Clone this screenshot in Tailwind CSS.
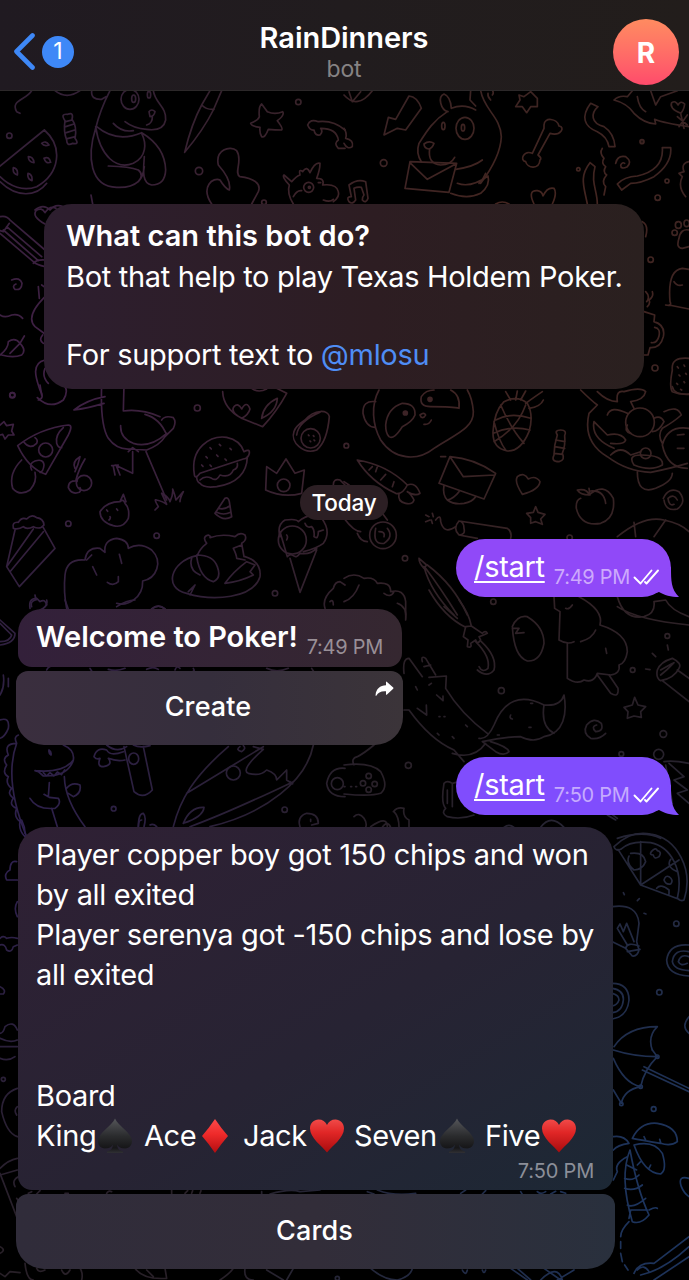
<!DOCTYPE html>
<html lang="en">
<head>
<meta charset="utf-8">
<title>RainDinners</title>
<script src="https://cdn.jsdelivr.net/npm/@tailwindcss/browser@4"></script>
</head>
<body class="bg-black">
<div class="relative isolate flex h-[1280px] w-[689px] flex-col overflow-hidden bg-black font-['Inter','Liberation_Sans',sans-serif] text-[29px] text-white">

  <!-- Doodle wallpaper: white strokes mask a soft colour wash -->
  <svg class="absolute inset-0 -z-10" width="689" height="1280" viewBox="0 0 689 1280">
    <defs>
      <radialGradient id="wp" gradientUnits="userSpaceOnUse" cx="60" cy="350" r="460"><stop offset="0" stop-color="#402046"/><stop offset="1" stop-color="#402046" stop-opacity="0"/></radialGradient>
      <radialGradient id="wr" gradientUnits="userSpaceOnUse" cx="540" cy="260" r="460"><stop offset="0" stop-color="#48261f"/><stop offset="1" stop-color="#48261f" stop-opacity="0"/></radialGradient>
      <radialGradient id="wb" gradientUnits="userSpaceOnUse" cx="689" cy="1200" r="480"><stop offset="0" stop-color="#1b3663"/><stop offset="1" stop-color="#1b3663" stop-opacity="0"/></radialGradient>
      <radialGradient id="wv" gradientUnits="userSpaceOnUse" cx="0" cy="850" r="380"><stop offset="0" stop-color="#2e2050"/><stop offset="1" stop-color="#2e2050" stop-opacity="0"/></radialGradient>
      <mask id="doodles" maskUnits="userSpaceOnUse" x="0" y="0" width="689" height="1280">
        <g fill="none" stroke="#fff" stroke-width="5" stroke-linecap="round" stroke-linejoin="round">
          <!-- top left -->
          <g transform="scale(.33333)">
            <path d="M95 272C80 300 30 300 50 335L60 340M165 272Q200 300 240 272"/>
            <circle cx="28" cy="407" r="8"/>
            <path d="M133 390L0 498M133 390C190 440 180 520 110 560C70 575 30 560 0 530M0 545C50 595 110 590 140 550M125 430q12-10 22 5q-15 5-22-5M85 470q15 0 17 18q-17-2-17-18M132 475q15-8 20 12q-15 5-20-12M40 503q15 3 12 22q-15-5-12-22M84 520q14 3 12 22q-15-5-12-22"/>
            <path d="M195 362Q180 340 203 343Q222 335 216 358Q232 380 225 415Q240 435 218 430Q200 440 200 420Q190 395 195 362M197 365L216 360M197 380L222 372M199 398L224 390M202 416L226 410"/>
            <path d="M330 272Q300 330 287 385C260 470 270 560 350 562C410 565 440 530 415 510Q390 500 325 498M275 272Q272 300 305 298L318 290M287 380C300 470 350 510 400 490C440 470 440 430 425 400M290 380Q350 430 425 398Q495 440 497 510Q495 555 455 555C425 550 430 510 433 470M433 500Q430 530 415 545M460 272C465 310 500 320 497 360Q490 395 440 388Q400 385 375 365M340 370Q365 398 400 392M447 335Q455 325 465 335Q462 350 450 350ZM457 350Q458 370 440 375"/>
            <ellipse cx="390" cy="298" rx="27" ry="30"/><ellipse cx="401" cy="296" rx="6" ry="11"/><ellipse cx="447" cy="284" rx="5" ry="10"/>
            <path d="M630 272L605 315Q575 370 554 457Q610 390 640 330L665 272M605 315Q620 330 642 328"/>
            <path d="M785 312L802 335Q825 345 848 335Q855 345 832 362Q850 385 845 390Q825 390 805 388Q795 415 785 410Q778 400 780 382Q755 380 752 370Q775 360 778 350Q775 320 785 312Z"/>
            <circle cx="895" cy="306" r="8"/><circle cx="597" cy="513" r="11"/><circle cx="792" cy="607" r="7"/>
            <path d="M1035 390Q1000 360 955 365Q930 355 923 375Q930 392 942 390Q945 408 960 405Q970 395 962 385Q1010 385 1015 420Q1000 430 1015 445L1035 445"/>
            <path d="M635 612C600 560 640 530 660 540Q675 565 688 570Q695 540 655 495C645 450 690 435 710 452C730 480 700 520 720 530C760 535 785 550 775 575L755 612M273 585L278 612M105 630Q130 610 150 630Q165 610 190 620"/>
            <path d="M880 612Q860 580 868 555Q845 530 852 525L875 545Q890 528 900 525Q895 505 908 515Q920 495 930 518Q945 485 960 490Q960 510 950 535Q975 535 968 555Q1010 550 1015 575Q1020 590 1000 605M880 590Q890 570 905 572M955 548L962 548M970 600Q990 608 1000 598"/><circle cx="926" cy="562" r="15"/><circle cx="928" cy="562" r="3"/>
          </g>
          <!-- top right -->
          <g transform="translate(344 0) scale(.33333)">
            <path d="M0 285Q40 330 85 272M15 275L25 305L50 275M0 385Q10 400 5 415Q30 420 25 440Q10 450 0 430"/>
            <path d="M195 288Q220 290 232 325L185 390L160 385L120 405L133 352L155 358Z"/>
            <path d="M312 335C290 330 280 290 300 282Q320 290 322 325Q360 310 395 330M380 272L378 300L395 318M410 272C420 330 470 350 472 410C470 460 440 510 410 550M310 335C270 360 250 390 225 430Q215 460 232 485M240 432Q255 420 270 430Q265 445 255 447Q240 445 240 432M257 447Q250 490 290 495Q320 495 332 472M335 508Q390 500 415 480M440 300Q430 290 432 280M445 285Q450 280 446 272"/>
            <ellipse cx="363" cy="385" rx="27" ry="33"/><ellipse cx="357" cy="383" rx="5" ry="10"/><ellipse cx="298" cy="378" rx="5" ry="11"/>
            <path d="M198 485L338 490L315 577L183 565ZM200 490L250 538L335 492M340 550Q380 565 432 528Q440 555 410 580Q370 600 320 580M405 550Q420 535 425 520"/>
            <circle cx="119" cy="489" r="10"/>
            <path d="M15 605Q5 590 22 590L15 555Q40 535 65 545L72 595Q65 612 55 600Q55 590 60 585L52 562Q40 560 30 565L35 600Q25 615 15 605"/>
            <path d="M525 285L540 290L560 275L580 295L580 320L560 320L548 338L535 320L515 320L528 300Z"/>
            <path d="M600 385L565 460C540 450 525 480 545 485C550 505 585 510 588 480Q595 475 582 465L618 400C650 410 665 380 645 378C640 355 600 350 600 375Z"/>
            <path d="M570 612Q550 570 580 572Q595 575 597 588Q610 560 630 565Q640 580 625 612M455 612Q475 600 495 612"/>
            <path d="M740 310C710 350 720 380 760 395Q790 410 795 440L813 440Q810 400 780 380C740 370 740 340 762 320ZM775 445Q765 460 780 475Q770 490 785 500Q775 515 788 525Q770 545 785 560L780 585M738 488C705 530 720 560 730 612M760 612C760 570 740 550 753 500L738 488"/>
            <path d="M810 300Q825 285 850 290L865 272M810 300Q850 310 870 340Q900 370 935 372L932 358Q960 370 1035 380M880 290Q885 325 905 335M920 272L935 315L950 290L1000 272"/>
            <path d="M1010 340Q975 325 983 308Q995 300 1002 315Q1010 300 1022 312Q1020 330 1010 340L1020 385M1000 350L1030 375M1030 345L1005 380"/>
            <circle cx="894" cy="425" r="6" fill="#fff" fill-opacity=".5"/><circle cx="703" cy="508" r="5"/><circle cx="969" cy="543" r="6"/><circle cx="941" cy="593" r="8"/>
            <path d="M815 490Q820 465 845 470Q865 485 850 500Q830 510 830 495Q835 485 842 490M955 443L980 443Q985 490 930 530Q890 550 860 550L833 570L820 552Q840 530 880 528Q960 510 955 443M1035 485Q1010 490 1020 515L1005 520L1015 530Q1000 560 1025 590"/>
          </g>
          <!-- beside the description card -->
          <g transform="translate(0 200) scale(.33333)">
            <path d="M135 72Q95 50 108 32Q125 20 135 38Q150 15 168 25M0 50Q20 45 32 62L135 150M0 100L100 185Q110 195 135 200M28 70L10 95L0 92M10 90L115 182M20 80L125 170M100 190Q110 178 135 180"/>
            <path d="M35 240Q60 230 66 250Q65 272 45 268Q35 258 48 252M0 345Q15 355 35 345Q55 340 68 355M0 465Q25 445 25 425Q45 410 60 430L73 408M60 430Q80 450 65 465Q40 475 5 465M30 460L60 430M135 290Q75 350 105 380L135 402M115 260L118 295M125 255L135 262M128 405Q115 420 130 430M135 480C90 490 110 540 120 570Q135 595 115 600M135 505Q125 530 145 550"/>
            <circle cx="37" cy="585" r="7"/>
          </g>
          <g transform="translate(344 200) scale(.33333)">
            <circle cx="920" cy="179" r="8"/><circle cx="933" cy="504" r="9"/>
            <ellipse cx="992" cy="98" rx="8" ry="8"/><ellipse cx="1003" cy="75" rx="9" ry="10"/><ellipse cx="1028" cy="70" rx="8" ry="10"/>
            <path d="M1035 90Q1010 85 1005 115Q995 145 1015 145L1035 140M895 65Q915 75 905 110M905 275Q920 290 908 305M925 275Q930 290 915 300Q920 310 910 320M900 335L932 345L930 365Q965 375 958 410Q950 445 918 443L912 465L900 465M932 382Q950 385 945 408Q940 430 922 428M965 315Q985 320 978 305Q970 210 1015 205L1035 208M975 315L1035 327M990 245Q1000 260 1015 255M1035 475Q980 470 985 510Q975 560 985 575Q1010 585 1035 582M1000 500l3 4M1020 495l2 4M1005 525l3 3M1025 520l2 3M998 550l3 3M1020 545l2 3M1010 568l3 2"/>
          </g>
          <!-- middle left -->
          <g transform="translate(0 385) scale(.33333)">
            <circle cx="37" cy="31" r="8"/><circle cx="592" cy="69" r="9"/><circle cx="205" cy="416" r="8"/><circle cx="470" cy="452" r="8"/><circle cx="825" cy="625" r="8"/>
            <path d="M120 0L125 30M112 38Q150 75 190 45Q205 20 195 5M0 120L12 110L20 122L40 118L35 138L42 150L25 150L15 162L8 148L0 150"/>
            <path d="M53 182Q120 130 205 120Q220 120 205 150L137 268Q85 250 53 182ZM72 172Q90 195 110 175Q115 165 105 158M190 128Q165 150 170 175Q175 190 185 188M95 255Q85 235 105 228Q130 220 132 240Q130 260 120 262M65 225Q25 265 38 310Q60 335 90 315Q112 290 105 262"/><circle cx="137" cy="195" r="21"/>
            <circle cx="252" cy="294" r="23"/><path d="M232 288Q205 285 205 308Q215 330 238 322Q245 315 240 308M228 285Q235 255 255 222M225 250Q215 230 240 215Q235 240 225 260"/>
            <path d="M305 0Q300 120 325 160Q350 195 390 192L440 195Q480 180 495 155L520 130Q530 110 520 98Q495 90 485 105M315 35Q260 45 222 75Q260 70 312 55M372 0L370 78Q420 70 480 95M362 122Q360 160 400 175Q450 190 500 145M435 88Q480 100 500 150M385 200L398 188L415 200M398 200V265L345 240M360 270L350 245M340 245L345 270M355 240L335 242M438 200L500 345M465 375L475 365Q460 340 470 345Q490 350 500 358L485 325Q505 335 510 350Q520 330 518 312Q525 330 528 345L550 320Q540 340 540 350"/>
            <path d="M583 268C570 190 630 150 680 157Q720 165 732 200Q750 190 748 205Q745 220 730 222L600 265Q585 285 583 268M590 275Q590 290 600 295Q610 310 650 305Q740 290 742 215M600 285Q615 270 635 280Q650 290 660 270Q690 280 700 255Q715 250 712 235"/>
            <path d="M630 188l4 4M658 178l4 4M690 190l4 4M618 215l4 4M650 210l4 4M675 222l4 4M605 240l4 4M630 240l4 4"/>
            <path d="M668 20Q670 70 725 100L788 125Q830 80 860 25Q840 15 830 10M725 100Q690 80 702 65Q715 52 725 72Q740 45 750 72Q745 90 725 100M785 100Q790 60 832 40Q830 80 785 100M755 10Q775 25 800 12"/>
            <path d="M915 105C945 70 985 75 988 95C985 130 975 175 950 195C910 210 870 170 882 140Q885 125 915 105M960 82Q895 110 890 150"/><circle cx="932" cy="160" r="29"/><path d="M925 150l2 2M940 152l2 2M930 168l2 2M942 165l2 2"/>
            <path d="M797 315L800 245L830 265L858 222L885 265L913 255L905 325Q850 340 797 315Z"/><circle cx="851" cy="301" r="19"/>
            <path d="M1000 300Q1000 280 1020 285L1035 300M840 455Q830 420 855 405Q890 400 895 410Q930 380 965 400Q995 440 970 475Q950 490 910 500M840 440L862 515Q870 505 880 512Q890 520 900 505Q930 510 950 490M870 520L900 622L950 495M915 415Q920 430 935 425Q945 435 942 455Q955 465 955 440L970 435M860 465Q865 455 860 450"/><circle cx="877" cy="465" r="42"/>
            <path d="M645 385L675 340Q685 335 688 350L695 395Q670 410 645 385M655 370Q675 375 690 362M650 382Q670 392 692 382"/>
            <path d="M300 380Q320 350 360 350Q370 340 375 355Q390 370 385 400Q370 430 340 422Q300 410 300 380M360 350L370 328L378 350M320 375l3 4M350 372l3 4M330 395q3 5-3 10"/>
            <path d="M40 430Q35 410 55 412Q65 395 80 402Q95 385 110 398Q130 400 132 420Q120 435 100 425Q80 435 70 425Q55 435 40 430M45 435L20 545L58 605L165 490L130 428M100 432L20 545M30 560L130 440"/>
            <path d="M200 670Q190 620 195 570Q200 520 255 525Q260 485 300 490L315 502Q310 465 350 460Q385 465 385 490Q420 470 455 495C490 530 470 580 428 588C430 640 380 665 350 655M278 545L290 570M358 508L365 535M322 592Q340 605 355 590V575M260 525L275 510M90 670Q85 640 110 640L120 650Q135 640 140 660M105 630L108 645"/>
            <path d="M590 515Q600 490 620 475Q605 455 625 450Q635 455 630 458Q665 445 705 455Q720 440 735 450Q742 465 725 475L732 515M590 510Q640 510 652 545Q665 580 640 590Q600 580 590 515M590 512C510 530 490 610 560 625C640 650 760 640 780 575Q785 530 735 515M585 600L570 630M585 600L565 620M700 490Q710 510 710 520L735 525M675 595Q700 560 740 530L765 540L750 560L760 570Q720 590 675 595M700 490L725 480M575 520Q565 555 600 570"/>
            <path d="M975 670Q965 640 1000 610Q1005 590 1020 590L1035 600M990 650Q1000 640 1000 660M455 672Q475 655 495 672"/>
          </g>
          <!-- middle right -->
          <g transform="translate(344 385) scale(.33333)">
            <circle cx="7" cy="182" r="7"/><circle cx="183" cy="520" r="8"/><circle cx="448" cy="650" r="8"/><circle cx="677" cy="458" r="8"/>
            <path d="M105 15C80 60 85 120 110 165C150 225 220 230 270 190C330 150 390 130 388 80Q385 40 370 15M95 50Q55 45 57 85Q65 125 92 127M232 35Q245 15 270 15M232 35Q225 65 260 65Q330 65 345 70Q350 30 320 15M125 120Q130 70 175 55Q215 55 213 90Q205 110 175 125Q150 165 135 155Q125 145 125 120M240 118Q255 120 262 105M228 90Q240 80 245 90Q240 100 232 97Z"/><circle cx="258" cy="43" r="6" fill="#fff"/><circle cx="184" cy="84" r="6" fill="#fff"/>
            <path d="M480 50Q520 30 550 55Q570 90 555 140Q530 200 490 198Q445 190 447 140Q450 80 480 50ZM455 105Q500 80 560 100M448 145Q500 120 558 135M470 60Q500 130 540 175M450 110Q465 170 485 195M545 60Q520 130 450 170M500 45L485 20M515 45L520 18M530 45L545 18M545 55Q580 30 595 20M555 70Q590 65 598 45"/>
            <path d="M640 150Q630 135 650 135Q670 135 662 152Q665 180 655 205Q665 225 645 230Q620 230 630 210Q630 180 640 150M635 165L663 170M632 185L662 190M630 205L656 208"/>
            <path d="M710 15Q740 45 760 60L735 85Q715 170 790 215Q850 260 920 262Q980 250 1030 235M760 20Q790 50 820 50Q815 15 840 20Q890 5 905 20Q900 45 860 50L870 70M850 85Q800 60 790 90M750 110Q740 160 810 190M750 110Q770 130 790 150Q830 140 845 165Q840 180 800 175M800 210Q830 180 860 210L890 200M870 240Q850 210 890 210Q960 210 955 240Q920 260 870 240M880 260Q880 330 935 310Q985 290 985 265M1035 130Q970 120 955 180Q970 250 1030 250M960 80Q1000 60 1012 90Q990 110 955 130Q940 150 955 175M1000 150L1020 148M1000 190L1020 190"/><circle cx="888" cy="112" r="43"/><circle cx="905" cy="205" r="16"/>
            <path d="M850 120Q840 140 860 145M930 100Q950 90 960 110Q945 140 925 140M985 5Q990 30 1035 28"/>
            <path d="M40 225Q130 240 190 300Q175 330 155 325Q80 290 40 225ZM75 255L85 245M100 245L95 260M110 285L125 268M145 305L150 290M165 325Q160 350 185 355Q205 360 210 345Q200 325 190 320M190 300Q215 290 228 325Q215 335 190 320"/>
            <path d="M318 215Q390 220 455 265L420 342L285 295ZM318 215L358 275L452 270M300 300Q295 330 310 345Q330 340 345 320M310 345Q330 360 360 355Q385 350 395 335M290 215L305 215"/>
            <path d="M535 328Q510 290 520 275Q540 260 553 282Q575 270 588 290Q585 315 535 328M575 365L582 382L603 388L590 402L595 418L575 410L560 415L560 398L548 385L568 382Z"/>
            <path d="M735 330Q780 290 808 340Q815 400 770 415Q710 425 697 370Q695 345 710 340M735 330Q730 310 700 315Q710 330 735 330M735 310L738 330M740 318Q780 315 785 355"/>
            <path d="M958 340Q975 305 1005 320Q1030 350 1000 372Q965 380 960 345M1000 345Q990 325 972 340Q975 365 990 358"/>
            <path d="M245 390L255 395M245 410L258 405M265 415L262 405M265 385L268 395M275 405Q290 385 290 410Q300 450 335 425M345 408Q325 430 345 450Q365 450 360 430Q360 410 345 408L490 430Q505 440 500 460M345 450L400 460"/>
            <path d="M820 455Q900 390 960 405Q1010 415 1035 440M870 412L875 455M965 405L930 455M0 400Q30 440 50 440M40 445Q50 470 70 470M0 290L15 300M115 385L130 405"/><circle cx="117" cy="451" r="40"/><path d="M95 430Q85 480 120 475Q150 455 130 430M105 440Q125 440 120 455"/>
            <path d="M225 520L248 540L240 550Q225 535 225 520M240 545Q260 620 330 690M250 540Q330 600 370 690M245 550Q290 610 340 690M0 580Q30 560 60 580Q90 575 100 595Q140 590 140 620Q180 610 185 650L185 690M45 600Q30 640 0 650M120 625Q140 640 150 620"/>
          </g>
          <g transform="translate(344 590) scale(.33333)">
            <circle cx="472" cy="302" r="9"/><circle cx="193" cy="526" r="9"/><circle cx="970" cy="138" r="7"/><circle cx="866" cy="240" r="7"/><circle cx="958" cy="432" r="10"/><circle cx="832" cy="492" r="7"/><circle cx="944" cy="493" r="15"/>
            <path d="M160 40Q190 50 185 90M255 0Q300 80 365 112M345 30Q375 70 382 108M300 50L340 85M365 110L358 140L372 150L370 170Q385 175 380 160L395 150Q400 165 410 150L405 140Q420 135 430 130Q425 120 415 130L382 108ZM395 155Q440 200 432 235Q415 250 405 230M412 155Q460 200 450 240Q430 265 400 240"/>
            <path d="M505 110Q520 75 550 80Q600 110 600 160Q590 215 550 213Q510 200 505 110M505 115L525 115L515 130L540 128"/>
            <path d="M630 20L632 55L648 65L645 150Q670 165 690 155M710 155Q745 145 755 120M705 20Q780 60 768 105Q850 130 850 185Q845 220 825 225Q830 250 800 255L760 250Q750 280 720 270Q700 285 670 265L670 160M760 255L800 310Q825 325 822 295L795 255M665 55Q675 60 685 45M785 175L788 190"/>
            <path d="M180 250Q175 205 195 205L235 260M235 215Q230 195 245 205L275 255M240 230L260 225M255 262L307 258L305 295Q350 370 430 430M180 360H195Q260 450 330 480L360 515M278 315L297 332V318M220 355L248 375L247 345M215 290L220 300M255 285L262 280M285 380h3M300 380h3M280 430l5 5M365 405l5 5M325 440l5 5M325 490Q390 510 425 460M405 445Q430 450 450 405C480 330 530 310 600 345Q650 350 660 315C670 370 660 430 600 440Q570 460 530 440Q480 440 415 455L455 485Q480 500 495 485Q490 470 440 455M600 345Q590 410 630 430M500 375q-5 10 5 12M560 340h6M555 412h6M460 435h6"/>
            <path d="M820 20Q840 90 900 80Q935 70 930 35L965 30Q980 60 1035 80M820 50Q880 90 1035 105M940 240Q950 215 985 205Q1015 220 1005 235Q990 265 950 272Q935 265 940 240M950 240Q975 225 990 218Q970 240 950 255M955 272L1035 335M1000 240L1035 265M970 165L973 180M925 190L935 200M905 237L918 239"/>
            <path d="M872 322L882 345L905 350L890 365L892 382L870 378L850 385L852 365L840 352L865 345ZM785 430Q765 450 740 445Q715 430 728 405Q750 380 772 400Q780 425 755 425Q740 410 758 405"/>
            <path d="M90 465Q60 490 40 500Q20 505 30 525M0 525Q80 515 110 545Q135 590 110 610Q80 620 0 612M0 590h3M20 590h3M35 590h3"/><circle cx="74" cy="558" r="8"/><circle cx="57" cy="580" r="8"/><circle cx="92" cy="582" r="8"/><circle cx="74" cy="599" r="8"/>
            <path d="M300 580Q310 570 325 580L345 575M300 580Q290 640 305 655Q290 670 310 680Q350 690 390 675M325 580V650M310 600v40M30 680Q45 665 60 685Q70 700 65 712M148 665Q160 650 180 655Q175 680 195 690L195 712M150 665Q165 680 165 712M115 712Q130 690 140 712M590 712Q620 670 660 712M480 712Q495 700 510 712M790 675L815 690M800 670L820 685M960 515Q985 510 1035 520M965 525Q975 580 985 640M975 520L1020 560L990 570L1030 600L1000 610L1035 640M820 745Q900 720 950 745"/>
          </g>
          <g transform="translate(0 600) scale(.33333)">
            <path d="M0 60L45 100Q45 130 0 135M0 70L35 105Q30 125 0 125M10 225Q15 260 0 285M25 235v25M0 360Q30 350 25 385Q15 410 0 415M95 20Q90 5 105 0M140 0Q145 20 120 30M195 0L205 28M350 20Q380 0 405 0M455 27Q475 10 495 27"/>
            <path d="M140 210q5-10 10-10M270 205l5 8M325 208Q350 215 375 205M440 208Q460 198 475 208M525 210q5-15 15-5M580 205q5 8 0 8M800 205Q830 220 865 205M935 205l5 8"/>
            <path d="M55 405Q40 410 50 430Q10 430 25 465Q5 475 20 495Q5 520 25 530Q15 550 35 565Q20 580 40 595Q25 615 50 625Q40 650 60 665Q55 690 75 710M50 430Q10 540 80 710M190 435Q225 450 220 480Q205 530 130 528L115 515L105 512M105 512Q190 520 220 480M130 518l10 10 10-10 12 10 10-12 12 8 10-14M147 450Q155 455 153 465Q145 460 147 450M148 548L145 590L132 583M90 595Q110 630 165 625Q185 610 175 595L148 592M155 625L172 680M193 530Q195 600 255 680M200 565Q215 545 240 555Q245 580 220 590L205 580"/>
            <path d="M372 440L402 575Q430 600 457 570L430 440M370 455Q330 470 320 450Q290 440 282 470Q290 480 300 475Q290 500 310 500Q340 495 325 475Q350 485 375 480M320 435Q350 460 380 440M400 435Q420 445 450 437"/><ellipse cx="401" cy="476" rx="15" ry="17"/>
            <circle cx="341" cy="626" r="7"/><circle cx="854" cy="629" r="8"/><circle cx="700" cy="519" r="21"/>
            <path d="M520 680C540 600 580 530 685 440M560 580L790 440M940 435C920 540 800 640 630 680M570 680Q680 640 880 545M720 440Q705 450 725 455Q740 445 730 437M760 440L790 448Q720 510 745 520Q780 530 800 510Q830 520 830 540L860 510V540Q890 560 870 545M550 670Q570 620 612 622Q610 650 550 670M415 680Q415 640 430 640Q440 650 432 680M900 680Q890 650 920 640Q955 640 955 670L935 675M932 658v6"/>
            <path d="M1035 505Q990 500 980 550Q985 590 1035 590"/><circle cx="1012" cy="551" r="18"/>
          </g>
          <!-- lower edges -->
          <g transform="translate(0 820) scale(.33333)">
            <path d="M65 0Q75 20 75 40M50 125Q30 120 30 150Q10 160 20 180L52 180M52 245Q40 265 52 290M0 355Q10 345 20 355Q35 350 52 355M0 375Q15 370 20 390Q35 400 40 380L52 375M0 500Q20 510 10 522L0 522M0 640Q10 640 15 620Q40 600 52 630M0 655Q30 670 52 660M0 680H52M415 20Q415 0 425 0M450 15Q460 10 470 20"/>
          </g>
          <g transform="translate(344 820) scale(.33333)">
            <path d="M810 80Q860 30 920 42C1000 55 1050 150 1020 240Q1010 245 1000 235C1020 150 980 80 920 68Q860 60 830 88Q815 95 810 80M822 88L890 195L1005 238M890 65V195L1005 120M860 100Q900 95 905 125Q895 150 870 150Q845 130 855 108M980 118Q965 140 1000 155M938 205Q950 190 975 210V222M922 95Q935 80 940 92Q955 95 945 110Q930 120 928 105Q915 105 922 95M960 180Q965 165 975 170Q990 180 980 192Q965 195 960 180"/>
            <path d="M805 260Q880 250 885 310Q880 350 878 365L885 390Q880 410 865 408L845 385L805 365M845 385Q850 365 885 378M850 395L888 388M820 325L850 375M820 325L828 312L838 335L848 310L870 365M838 218l3 6M880 242l6-6M900 280l6 2"/>
            <circle cx="997" cy="311" r="8"/><circle cx="946" cy="517" r="8"/>
            <path d="M1035 375Q975 370 968 420Q970 465 1035 468M1035 395Q990 385 985 425Q990 450 1035 452M1035 410Q1010 400 1003 425Q1010 440 1030 430M805 490Q855 490 855 540Q850 590 805 597M805 505Q840 510 838 540Q835 575 805 578M805 520Q825 525 825 540Q820 555 805 558M1035 590Q1010 620 1035 640M810 680Q850 620 940 620Q910 650 925 690M80 20Q130 -15 130 20"/>
          </g>
          <g transform="translate(344 1050) scale(.33333)">
            <path d="M808 0Q870 20 940 20M925 0L940 20M808 25Q840 100 890 110M940 20Q900 60 890 110Q840 120 832 160L808 120M900 50L1035 115M895 60L1035 125M1035 385Q1000 375 1012 410Q1020 430 1035 440"/>
            <circle cx="940" cy="20" r="5"/><circle cx="890" cy="110" r="5"/><circle cx="832" cy="162" r="5"/><circle cx="929" cy="177" r="7"/>
            <path d="M865 265Q890 215 940 220Q1000 230 1000 275Q980 290 950 280Q890 270 865 265M870 285Q930 270 955 310Q970 360 950 372Q900 370 870 285M808 260Q840 255 855 280Q820 285 808 300M850 320Q810 340 820 365L808 390M880 345l10-10M915 355l5-10M905 270l-5-10M950 278l-3-10"/>
            <path d="M858 300Q825 380 865 515Q890 525 915 495Q880 420 858 300M848 345l30 15M842 385Q865 395 885 375M842 415Q870 425 895 405M850 465Q870 475 905 445M855 505L860 480L910 480M915 480Q935 470 940 475M855 515Q830 540 830 560M830 575V595M830 610L835 635M842 645L852 660"/>
            <path d="M870 670Q885 635 930 640L1035 560M890 675Q960 660 1035 590M880 660Q900 640 915 665M930 690L1035 620M80 655Q120 690 160 690Q200 680 205 655M355 660q10 20 15 0M415 660q5 15 10 0M500 655L550 690M520 655L560 690M590 690Q640 640 655 690M600 655L650 690M690 660L640 690"/>
            <path d="M70 425L90 432M100 420Q150 440 215 430M350 430l15-10M415 432l10-10M530 425l5 8M580 425Q590 435 605 425M620 432l15-8M650 425l15 5"/>
          </g>
          <g transform="translate(0 1050) scale(.33333)">
            <path d="M0 25Q25 35 45 20M52 115Q5 130 5 185Q20 250 52 260M52 170Q40 180 50 195M0 355Q25 330 52 325M0 375L52 360M0 370L50 500M55 380Q35 390 45 410M50 445Q60 455 52 465M0 590Q20 600 0 610M0 670L15 680L30 665L60 668M75 640Q80 690 100 690M110 655Q115 670 135 660M185 660q10 25 25 0M240 655Q250 670 245 690M405 655Q430 690 500 685L495 655M440 660l20 20M660 690Q690 670 700 655M735 655Q730 690 760 690M800 660L850 690M880 655L860 690M85 430l10-5M110 432l10-10M195 430l10 0M320 430q5-10 15-5M515 420v12M555 430l8-8M575 430l3-8M600 430l3-8M785 425v10M810 432Q870 415 900 425L960 420"/>
            <circle cx="10" cy="88" r="6"/><circle cx="1012" cy="685" r="6"/>
          </g>
        </g>
      </mask>
    </defs>
    <g mask="url(#doodles)">
      <rect width="689" height="1280" fill="#282028"/>
      <rect width="689" height="1280" fill="url(#wp)"/>
      <rect width="689" height="1280" fill="url(#wr)"/>
      <rect width="689" height="1280" fill="url(#wb)"/>
      <rect width="689" height="1280" fill="url(#wv)"/>
    </g>
  </svg>

  <header class="flex h-[91px] shrink-0 items-start justify-between border-b border-[#2c2829] bg-linear-to-r from-[#201a21] via-[#211c1e] to-[#221d1b] pr-[10px] pl-[12px]">
    <div class="mt-[32px] flex w-[120px] items-center gap-[7px]">
      <svg width="23" height="39" viewBox="0 0 23 39" fill="none" stroke="#3e88f7" stroke-width="4.6" stroke-linecap="round" stroke-linejoin="round"><path d="M20.500 3.500L4.500 19.500L20.500 35.500"/></svg>
      <span class="flex size-[32px] items-center justify-center rounded-full bg-[#3e88f7] text-[23px] leading-none">1</span>
    </div>
    <div class="mt-[19px] -ml-[3px] text-center">
      <h1 class="text-[29px] leading-[38px] font-semibold tracking-[-0.05px]">RainDinners</h1>
      <p class="text-[23px] leading-[24px] tracking-[-0.2px] text-[#868384]">bot</p>
    </div>
    <div class="mt-[19px] flex w-[120px] justify-end">
      <span class="flex size-[66px] items-center justify-center rounded-full bg-linear-to-b from-[#ff8b60] to-[#ff4a6b] pt-[1px] text-[28px] font-bold">R</span>
    </div>
  </header>

  <main class="flex flex-1 flex-col pt-[113px]">
    <section class="ml-[44px] h-[185px] w-[600px] rounded-[28px] bg-linear-to-r from-[#2d1e2f] via-[#2d1d22] via-55% to-[#2a201f] px-[22px] pt-[12px]">
      <h2 class="leading-[40px] font-semibold whitespace-nowrap">What can this bot do?</h2>
      <p class="mt-px leading-[39px] whitespace-nowrap tracking-[-0.31px]">Bot that help to play Texas Holdem Poker.<br><br>For support text to <a class="text-[#4f8df5]">@mlosu</a></p>
    </section>

    <div class="mt-[96px] ml-[300px] flex h-[35px] w-[88px] items-center justify-center rounded-full bg-[#2c1f24] text-[22.500px] font-medium tracking-[-0.2px]">Today</div>

    <section class="relative mt-[19px] ml-[456px] flex h-[58px] w-[215px] items-start rounded-[29px] bg-[#9049f8] pl-[18px]">
      <svg class="absolute right-[-8px] bottom-0" width="34" height="30" viewBox="0 0 34 30" fill="#9049f8"><path d="M26 0C26 14 26 22 34 30C26 30 19 28 14 25L0 29L10 10Z"/></svg>
      <span class="relative mt-[8px] leading-[40px] tracking-[-0.3px] underline decoration-2 underline-offset-[4px]">/start</span>
      <span class="relative mt-[26px] ml-[9px] text-[20px] leading-[24px] tracking-[-0.25px] whitespace-nowrap text-[#cda9fc]">7:49 PM</span>
      <svg class="relative mt-[30px] ml-[3px] shrink-0" width="27" height="17" viewBox="0 0 27 17" fill="none" stroke="#fff" stroke-width="1.9" stroke-linecap="round" stroke-linejoin="round"><path d="M1.5 8.500L7.500 14.500L18.500 1.500M12 13L13.500 14.500L25 1.500"/></svg>
    </section>

    <section class="mt-[12px] ml-[18px] flex h-[58px] w-[384px] items-start rounded-t-[24px] rounded-b-[14px] bg-linear-to-r from-[#33203a] to-[#352730] pl-[18px]">
      <span class="mt-[8px] leading-[40px] font-semibold tracking-[-0.07px] whitespace-nowrap">Welcome to Poker!</span>
      <span class="mt-[26px] ml-[9px] text-[20px] leading-[24px] tracking-[-0.25px] whitespace-nowrap text-[#998f97]">7:49 PM</span>
    </section>
    <button class="relative mt-[4px] ml-[16px] h-[74px] w-[387px] rounded-t-[12px] rounded-b-[28px] bg-linear-to-r from-[#3a2e3e] via-[#352e3c] to-[#3b3439] pr-[3px] pb-[1px] text-[27px] font-medium tracking-[0.1px]">Create
      <svg class="absolute top-[10px] right-[9px]" width="19" height="16" viewBox="0 0 19 16" fill="#fff"><path d="M11 1.2Q11 .2 12 .9L18.2 6.6Q18.8 7.2 18.2 7.8L12 13.4Q11 14.2 11 13.2V10.2C6 9.8 3 11.5 1.5 14.5Q.6 15.6 .6 14C1 8 5 4.6 11 4.3Z"/></svg>
    </button>

    <section class="relative mt-[12px] ml-[456px] flex h-[58px] w-[215px] items-start rounded-[29px] bg-[#804dfd] pl-[18px]">
      <svg class="absolute right-[-8px] bottom-0" width="34" height="30" viewBox="0 0 34 30" fill="#804dfd"><path d="M26 0C26 14 26 22 34 30C26 30 19 28 14 25L0 29L10 10Z"/></svg>
      <span class="relative mt-[8px] leading-[40px] tracking-[-0.3px] underline decoration-2 underline-offset-[4px]">/start</span>
      <span class="relative mt-[26px] ml-[9px] text-[20px] leading-[24px] tracking-[-0.25px] whitespace-nowrap text-[#c6abfe]">7:50 PM</span>
      <svg class="relative mt-[30px] ml-[3px] shrink-0" width="27" height="17" viewBox="0 0 27 17" fill="none" stroke="#fff" stroke-width="1.9" stroke-linecap="round" stroke-linejoin="round"><path d="M1.5 8.500L7.500 14.500L18.500 1.500M12 13L13.500 14.500L25 1.500"/></svg>
    </section>

    <section class="mt-[12px] ml-[18px] h-[363px] w-[595px] rounded-t-[28px] rounded-b-[14px] bg-linear-to-br from-[#2f2034] via-[#272333] via-55% to-[#1c2835] pt-[8px] pr-[19px] pl-[18px]">
      <p class="leading-[40.150px] whitespace-nowrap tracking-[-0.33px]">Player copper boy got 150 chips and won<br>by all exited<br>Player serenya got -150 chips and lose by<br>all exited<br><br><br>Board</p>
      <div class="flex h-[40px] leading-[40px] tracking-[-0.4px]">
        <span class="flex w-[108px] shrink-0 items-center gap-[1px]">King<svg width="36" height="36" viewBox="0 0 36 36"><use href="#spade"/></svg></span>
        <span class="flex w-[99px] shrink-0 items-center gap-[5px]">Ace<svg width="28" height="36" viewBox="0 0 28 36"><path d="M14 1Q20 10 27 18Q20 26 14 35Q8 26 1 18Q8 10 14 1Z" fill="url(#red)"/></svg></span>
        <span class="flex w-[111px] shrink-0 items-center gap-[2px]">Jack<svg width="36" height="36" viewBox="0 0 36 36"><use href="#heart"/></svg></span>
        <span class="flex w-[131px] shrink-0 items-center gap-[2px]">Seven<svg width="36" height="36" viewBox="0 0 36 36"><use href="#spade"/></svg></span>
        <span class="flex shrink-0 items-center gap-[1px]">Five<svg width="36" height="36" viewBox="0 0 36 36"><use href="#heart"/></svg></span>
      </div>
      <p class="mt-[3px] text-right text-[20px] leading-[24px] tracking-[-0.2px] text-[#8c8f99]">7:50 PM</p>
    </section>
    <button class="mt-[4px] ml-[16px] h-[75px] w-[599px] rounded-t-[12px] rounded-b-[28px] bg-linear-to-r from-[#302c3a] via-[#322d39] to-[#29303d] pr-[2px] text-[27px] font-medium tracking-[0.1px]">Cards</button>
  </main>

  <svg class="absolute" width="0" height="0">
    <defs>
      <linearGradient id="red" x1="0" y1="0" x2="0" y2="1"><stop offset="0" stop-color="#fb4a4a"/><stop offset=".45" stop-color="#ee2a2a"/><stop offset="1" stop-color="#b30d10"/></linearGradient>
      <linearGradient id="redh" x1="0" y1="0" x2="0" y2="1"><stop offset="0" stop-color="#f04a48"/><stop offset=".4" stop-color="#e02626"/><stop offset="1" stop-color="#a80c0e"/></linearGradient>
      <linearGradient id="blk" x1="0" y1="0" x2="0" y2="1"><stop offset="0" stop-color="#55565a"/><stop offset=".5" stop-color="#2b2c2e"/><stop offset=".85" stop-color="#161618"/><stop offset="1" stop-color="#303034"/></linearGradient>
      <path id="heart" fill="url(#redh)" d="M18 34.500C13 28 1 20 1 10.500C1 5 5 1.500 9.500 1.500C13.500 1.500 16.500 3.500 18 7C19.500 3.500 22.500 1.500 26.500 1.500C31 1.500 35 5 35 10.500C35 20 23 28 18 34.500Z"/>
      <path id="spade" fill="url(#blk)" d="M18 .5C21 8 35 15 35 23C35 28 31.500 30.500 27.500 30.500C24 30.500 21.500 29 20 26.500C20.500 30.500 22 32.500 26 33.500V35H10V33.500C14 32.500 15.500 30.500 16 26.500C14.500 29 12 30.500 8.500 30.500C4.500 30.500 1 28 1 23C1 15 15 8 18 .5Z"/>
    </defs>
  </svg>
</div>
</body>
</html>
